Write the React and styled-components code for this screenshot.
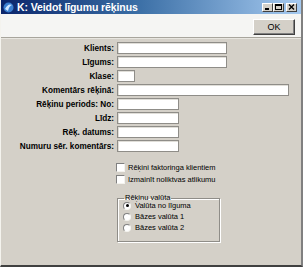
import React from "react";
import styled, { createGlobalStyle } from "styled-components";

const Global = createGlobalStyle`
  html, body { margin: 0; padding: 0; background: #d4d0c8; }
  body { font-family: "Liberation Sans", Arial, sans-serif; }
`;

const Win = styled.div`
  width: 303px;
  height: 267px;
  box-sizing: border-box;
  display: flex;
  flex-direction: column;
  background: #d4d0c8;
  border-left: 1px solid #f4f3ee;
  border-right: 2px solid #808080;
  border-bottom: 2px solid #404040;
  overflow: hidden;
`;

const TitleBar = styled.div`
  height: 14px;
  display: flex;
  align-items: center;
  padding: 0 4px 0 2px;
  background: linear-gradient(90deg, #0a246a 0%, #3a6ea5 45%, #a6caf0 100%);
  color: #fff;
  font-weight: bold;
  font-size: 10.5px;
`;

const Title = styled.span`
  flex: 1;
  margin-left: 3px;
  white-space: nowrap;
  letter-spacing: -0.1px;
`;

const CapBtns = styled.div`
  display: flex;
`;

const CapBtn = styled.div`
  width: 11px;
  height: 9px;
  margin-left: ${(p) => (p.$gap ? "2px" : "0")};
  background: #d4d0c8;
  box-sizing: border-box;
  border: 1px solid;
  border-color: #fff #404040 #404040 #fff;
  display: flex;
  align-items: center;
  justify-content: center;
`;

const ToolBar = styled.div`
  height: 23px;
  background: #f5f5f3;
  border-bottom: 1px solid #a8a59c;
  display: flex;
  align-items: center;
  justify-content: flex-end;
  padding-right: 6px;
`;

const OkButton = styled.button`
  width: 42px;
  height: 16px;
  margin-top: 3px;
  padding: 0;
  font-family: "Liberation Sans", Arial, sans-serif;
  font-size: 9px;
  color: #000;
  background: #d4d0c8;
  border: 1px solid;
  border-color: #fff #404040 #404040 #fff;
  box-shadow: inset -1px -1px 0 #808080;
`;

const Body = styled.div`
  flex: 1;
  padding: 3px 0 0 0;
  border-top: 1px solid #e8e6e0;
`;

const Form = styled.div`
  display: grid;
  grid-template-columns: 116px 1fr;
  row-gap: 2px;
  align-items: center;
`;

const Label = styled.label`
  text-align: right;
  padding-right: 3px;
  font-size: 8.2px;
  font-weight: bold;
  color: #000;
  white-space: nowrap;
`;

const Input = styled.div`
  width: ${(p) => p.$w}px;
  height: 12px;
  box-sizing: border-box;
  background: #fff;
  border: 1px solid #8f8d88;
  box-shadow: inset 1px 1px 0 #e0ded8;
`;

const Checks = styled.div`
  display: flex;
  flex-direction: column;
  gap: 3px;
  margin: 11px 0 0 115px;
`;

const CheckRow = styled.div`
  display: flex;
  align-items: center;
  font-size: 7.5px;
  color: #000;
`;

const Box = styled.span`
  width: 9px;
  height: 9px;
  box-sizing: border-box;
  background: #fff;
  border: 1px solid;
  border-color: #808080 #f4f3ee #f4f3ee #808080;
  margin-right: 3px;
`;

const Group = styled.fieldset`
  margin: 10px 0 0 116px;
  width: 103px;
  height: 48px;
  box-sizing: border-box;
  padding: 0 0 0 5px;
  border: 1px solid #8f8d88;
  box-shadow: 1px 1px 0 #fff, inset 1px 1px 0 #fff;
  font-size: 7.5px;
`;

const Legend = styled.legend`
  padding: 0 1px;
  margin-left: 1px;
  font-size: 7.5px;
  line-height: 8px;
`;

const RadioList = styled.div`
  margin-top: -2px;
`;

const RadioRow = styled.div`
  display: flex;
  align-items: center;
  height: 11px;
`;

const Dot = styled.span`
  width: 8px;
  height: 8px;
  box-sizing: border-box;
  border-radius: 50%;
  background: #fff;
  border: 1px solid;
  border-color: #808080 #f4f3ee #f4f3ee #808080;
  margin-right: 4px;
  display: flex;
  align-items: center;
  justify-content: center;
  &::after {
    content: "";
    width: 3px;
    height: 3px;
    border-radius: 50%;
    background: ${(p) => (p.$on ? "#000" : "transparent")};
  }
`;

const fields = [
  ["Klients:", 110],
  ["Līgums:", 110],
  ["Klase:", 18],
  ["Komentārs rēķinā:", 172],
  ["Rēķinu periods: No:", 62],
  ["Līdz:", 62],
  ["Rēķ. datums:", 62],
  ["Numuru sēr. komentārs:", 62],
];

export default function App() {
  return (
    <Win>
      <Global />
      <TitleBar>
        <svg width="11" height="11" viewBox="0 0 11 11">
          <circle cx="5.5" cy="5.5" r="5" fill="#3b7fd0" />
          <path d="M2 7 Q5 1 9 3 Q6 4 5 9 Z" fill="#cfe6ff" />
        </svg>
        <Title>K: Veidot līgumu rēķinus</Title>
        <CapBtns>
          <CapBtn>
            <svg width="7" height="6"><rect x="1" y="4" width="4" height="2" fill="#000" /></svg>
          </CapBtn>
          <CapBtn>
            <svg width="7" height="6"><rect x="0.5" y="0.5" width="6" height="5" fill="none" stroke="#000" /><rect x="0" y="0" width="7" height="2" fill="#000" /></svg>
          </CapBtn>
          <CapBtn $gap>
            <svg width="7" height="6"><path d="M1 0.5 L6 5.5 M6 0.5 L1 5.5" stroke="#000" strokeWidth="1.4" /></svg>
          </CapBtn>
        </CapBtns>
      </TitleBar>
      <ToolBar>
        <OkButton>OK</OkButton>
      </ToolBar>
      <Body>
        <Form>
          {fields.map(([l, w]) => (
            <React.Fragment key={l}>
              <Label>{l}</Label>
              <Input $w={w} />
            </React.Fragment>
          ))}
        </Form>
        <Checks>
          <CheckRow><Box />Rēķini faktoringa klientiem</CheckRow>
          <CheckRow><Box />Izmainīt noliktvas atlikumu</CheckRow>
        </Checks>
        <Group>
          <Legend>Rēķinu valūta</Legend>
          <RadioList>
            <RadioRow><Dot $on />Valūta no līguma</RadioRow>
            <RadioRow><Dot />Bāzes valūta 1</RadioRow>
            <RadioRow><Dot />Bāzes valūta 2</RadioRow>
          </RadioList>
        </Group>
      </Body>
    </Win>
  );
}
